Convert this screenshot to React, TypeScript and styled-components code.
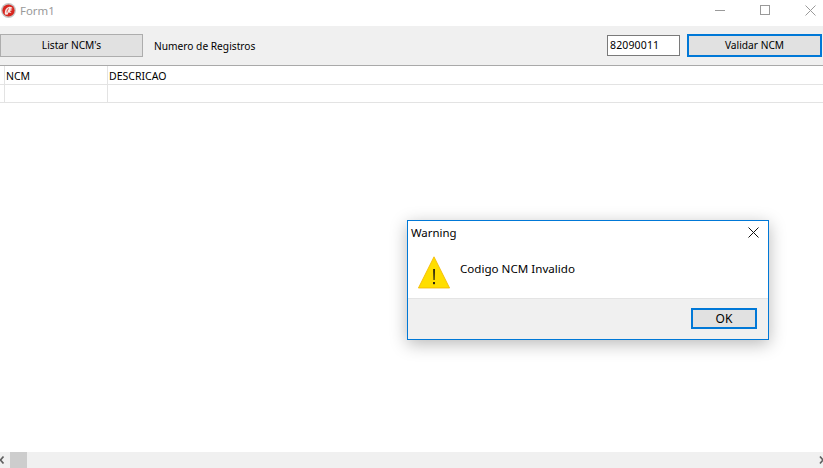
import React from "react";
import styled, { createGlobalStyle } from "styled-components";

const Global = createGlobalStyle`
  html, body { margin: 0; padding: 0; background: #fff; }
  body { font-family: "Noto Sans", "Open Sans", sans-serif; font-size: 11px; color: #000; }
`;

const Win = styled.div`
  position: relative;
  width: 823px;
  height: 468px;
  overflow: hidden;
  display: flex;
  flex-direction: column;
  background: #fff;
`;

const TitleBar = styled.div`
  height: 26px;
  display: flex;
  align-items: center;
  padding: 0 7px 5px 1px;
  box-sizing: border-box;
  background: #fff;
`;

const Logo = styled.svg`
  width: 15px;
  height: 15px;
  flex: none;
`;

const Title = styled.span`
  margin-left: 4px;
  font-size: 11.4px;
  color: #999;
  flex: 1;
`;

const Caption = styled.div`
  display: flex;
  align-items: center;
  gap: 34px;
`;

const Glyph = styled.svg`
  width: 11px;
  height: 11px;
  flex: none;
  display: block;
`;

const Toolbar = styled.div`
  height: 40px;
  background: #f0f0f0;
  display: flex;
  align-items: center;
  padding-bottom: 1px;
  padding-right: 1px;
  box-sizing: border-box;
  border-bottom: 1px solid #a9a9a9;
`;

const Btn = styled.button<{ $focus?: boolean; $w: number }>`
  width: ${(p) => p.$w}px;
  height: 23px;
  box-sizing: border-box;
  flex: none;
  padding: 0;
  margin: 0;
  background: #e1e1e1;
  border: ${(p) => (p.$focus ? "2px solid #0078d7" : "1px solid #adadad")};
  font: inherit;
  font-size: 10.2px;
  color: #000;
`;

const Label = styled.span`
  margin-left: 11px;
  margin-top: 2px;
  font-size: 10.2px;
  flex: 1;
`;

const Input = styled.div`
  width: 73px;
  height: 21px;
  box-sizing: border-box;
  border: 1px solid #7a7a7a;
  background: #fff;
  font-size: 10.5px;
  line-height: 19px;
  padding-left: 2px;
  margin-right: 7px;
  letter-spacing: 0.15px;
`;

const GridRow = styled.div<{ $h: number }>`
  display: grid;
  grid-template-columns: 5px 103px 1fr;
  height: ${(p) => p.$h}px;
  box-sizing: border-box;
  border-bottom: 1px solid #e3e3e3;
`;

const Cell = styled.div`
  border-right: 1px solid #e3e3e3;
  font-size: 10.5px;
  line-height: 20px;
  padding-left: 1px;
  overflow: hidden;
  &:last-child { border-right: 0; }
`;

const Spacer = styled.div`
  flex: 1;
`;

const ScrollBar = styled.div`
  height: 16px;
  background: #f0f0f0;
  display: flex;
  align-items: center;
`;

const Arrow = styled.svg`
  width: 10px;
  height: 16px;
  flex: none;
  display: block;
`;

const Thumb = styled.div`
  width: 17px;
  height: 16px;
  background: #cdcdcd;
  flex: none;
`;

const Track = styled.div`
  flex: 1;
`;

const Dialog = styled.div`
  position: absolute;
  left: 407px;
  top: 220px;
  width: 362px;
  height: 120px;
  box-sizing: border-box;
  border: 1px solid #0078d7;
  background: #fff;
  box-shadow: 0 4px 16px rgba(0, 0, 0, 0.28);
  display: flex;
  flex-direction: column;
`;

const DlgHead = styled.div`
  height: 24px;
  box-sizing: border-box;
  display: flex;
  align-items: center;
  justify-content: space-between;
  padding: 0 9px 2px 3px;
  font-size: 11.4px;
`;

const DlgBody = styled.div`
  flex: 1;
  display: flex;
  align-items: flex-start;
  padding: 11px 0 0 10px;
`;

const WarnIcon = styled.svg`
  width: 33px;
  height: 33px;
  flex: none;
`;

const Message = styled.span`
  margin-left: 9px;
  margin-top: 5px;
  font-size: 11.6px;
`;

const DlgFoot = styled.div`
  height: 41px;
  box-sizing: border-box;
  background: #f0f0f0;
  border-top: 1px solid #e4e4e4;
  display: flex;
  align-items: center;
  justify-content: flex-end;
  padding: 0 11px 2px 0;
`;

const OkBtn = styled(Btn)`
  height: 21px;
  font-size: 12px;
`;

export default function App() {
  return (
    <Win>
      <Global />
      <TitleBar>
        <Logo viewBox="0 0 15 15">
          <circle cx="7.5" cy="7.5" r="7.4" fill="#c4c4c4" />
          <circle cx="7.5" cy="7.5" r="6.1" fill="#d8261f" />
          <path d="M4 11.5c-.6-3 .4-6.5 3.6-7.6 2-.6 3.6.3 3.9 1.4L9.2 6l2.3 1-2.6 1 1.6 2-3-.6-1 2.4z" fill="#f7e6e2" />
          <path d="M6 9.5c0-2 .6-3.4 2-4" fill="none" stroke="#d8261f" strokeWidth="0.8" />
        </Logo>
        <Title>Form1</Title>
        <Caption>
          <Glyph viewBox="0 0 11 11">
            <path d="M0 5.5h10" stroke="#9a9a9a" strokeWidth="1" />
          </Glyph>
          <Glyph viewBox="0 0 11 11">
            <rect x="0.5" y="0.5" width="9" height="9" fill="none" stroke="#9a9a9a" />
          </Glyph>
          <Glyph viewBox="0 0 11 11">
            <path d="M0.5 0.5l10 10M10.5 0.5l-10 10" stroke="#9a9a9a" strokeWidth="1" />
          </Glyph>
        </Caption>
      </TitleBar>
      <Toolbar>
        <Btn $w={143}>Listar NCM's</Btn>
        <Label>Numero de Registros</Label>
        <Input>82090011</Input>
        <Btn $w={135} $focus>Validar NCM</Btn>
      </Toolbar>
      <GridRow $h={19}>
        <Cell />
        <Cell>NCM</Cell>
        <Cell>DESCRICAO</Cell>
      </GridRow>
      <GridRow $h={18}>
        <Cell />
        <Cell />
        <Cell />
      </GridRow>
      <Spacer />
      <ScrollBar>
        <Arrow viewBox="0 0 10 16">
          <path d="M3.5 4.5L0.5 8l3 3.5" fill="none" stroke="#606060" strokeWidth="1.7" />
        </Arrow>
        <Thumb />
        <Track />
        <Arrow viewBox="0 0 10 16">
          <path d="M7 4.5l3 3.5-3 3.5" fill="none" stroke="#606060" strokeWidth="1.7" />
        </Arrow>
      </ScrollBar>
      <Dialog>
        <DlgHead>
          <span>Warning</span>
          <Glyph viewBox="0 0 11 11">
            <path d="M0.5 0.5l10 10M10.5 0.5l-10 10" stroke="#111" strokeWidth="1" />
          </Glyph>
        </DlgHead>
        <DlgBody>
          <WarnIcon viewBox="0 0 33 33">
            <path d="M16 0.8L31.6 32H0.4z" fill="#ffde00" stroke="#f2b600" strokeWidth="0.8" strokeLinejoin="round" />
            <path d="M15.2 13h1.7l-.3 11h-1.1z" fill="#111" />
            <rect x="15.1" y="26" width="1.8" height="2.2" fill="#111" />
          </WarnIcon>
          <Message>Codigo NCM Invalido</Message>
        </DlgBody>
        <DlgFoot>
          <OkBtn $w={66} $focus>OK</OkBtn>
        </DlgFoot>
      </Dialog>
    </Win>
  );
}
